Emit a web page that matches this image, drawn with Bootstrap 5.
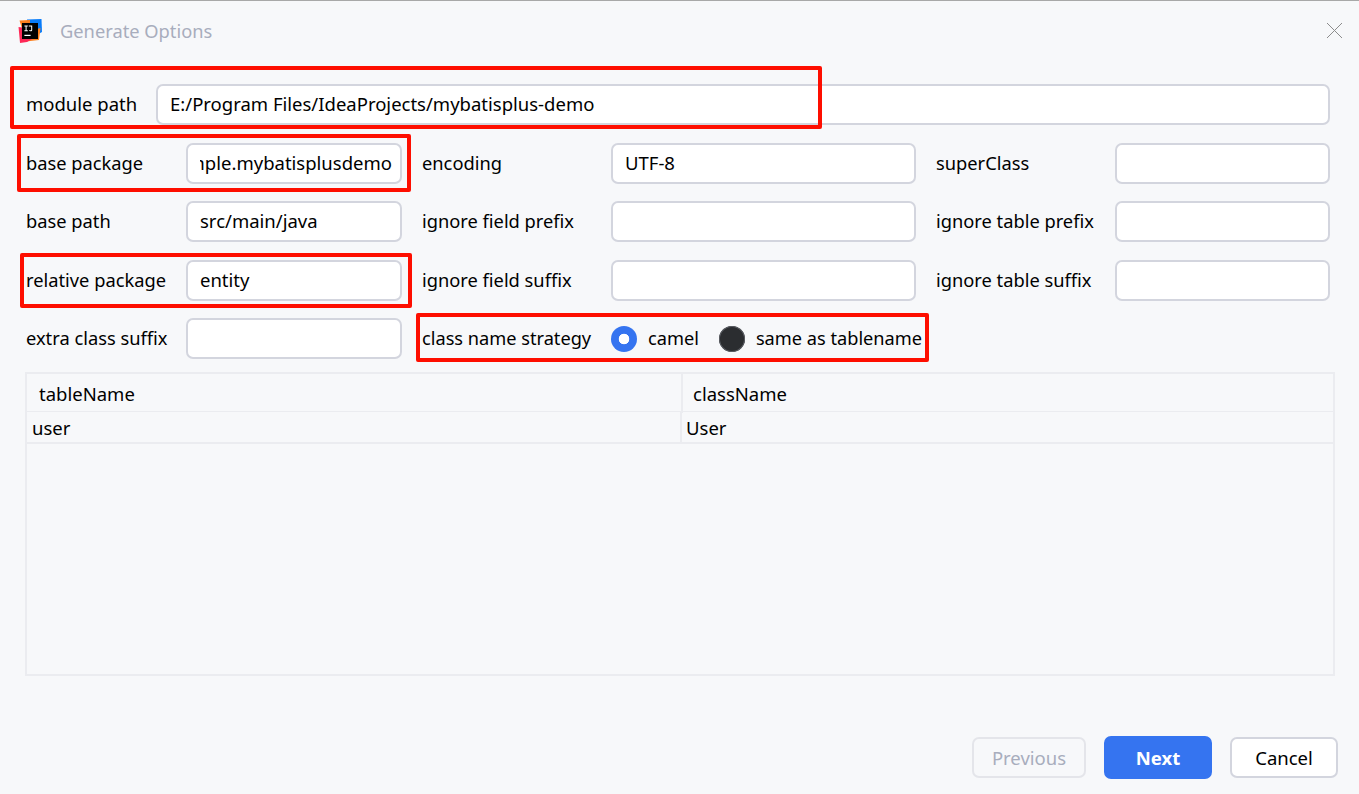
<!doctype html>
<html lang="en">
<head>
<meta charset="utf-8">
<title>Generate Options</title>
<link href="https://cdn.jsdelivr.net/npm/bootstrap@5.3.0/dist/css/bootstrap.min.css" rel="stylesheet">
<style>
html,body{height:100%}
body{background:#f7f8fa;font-family:"Noto Sans",sans-serif;font-size:18.5px;color:#000;overflow:hidden}
.dlg{position:relative;width:1359px;height:794px;border-top:1px solid #a8a8a8}
.dlg-head{height:60px;padding:0 17px 0 18px}
.dlg-logo{flex:none;display:block}
.dlg-title{color:#a8adbd;font-size:18.3px;margin-left:18px;line-height:1}
.dlg-x{width:15px;height:15px;margin-top:-2px}
.dlg-form{padding:23px 29px 0 26px;display:grid;grid-template-columns:160px 216px 209px 305px 199px 215px;row-gap:17.5px}
.fld-label{line-height:39px;height:41px;white-space:nowrap;font-size:18.3px}
.fld-gap{margin-left:20px}
.fld-input.form-control{height:41px;padding:0 8px 2px 12px;border:2px solid #d3d5de;border-radius:7px;font-size:18.5px;color:#000;background:#fff;box-shadow:none}
.span-mod{grid-column:1/-1;display:flex}
.span-mod .fld-label{width:130px;flex:none;font-size:18.5px}
.span-mod .form-control{flex:1;width:auto}
.radio-row{grid-column:3/5;margin-left:20px;display:flex;align-items:center;height:41px;white-space:nowrap;font-size:18.2px}
.radio-row span{margin-top:0}
.rd.form-check-input{width:26px;height:26px;margin:0;flex:none;border:0;background-image:none;background-color:#2b2d30;box-shadow:inset 0 0 0 1px #5a5d63}
.rd.form-check-input:checked{background-color:#3574f0;background-image:radial-gradient(circle at center,#fff 0 5px,#3574f0 5.6px);box-shadow:none}
.rd.rd-gap.form-check-input{margin-left:20px}
.rd-lbl{margin-left:11px}
.strat{width:189px;flex:none}
.grid-tbl{margin:13px 24px 0 25px;height:304px;border:2px solid #ebecf0}
.tbl-row{display:grid}
.tbl-h{grid-template-columns:654px 1fr;height:38px;line-height:39px;border-bottom:1px solid #ebecf0}
.tbl-h>div{padding-left:12px}
.tbl-h>div+div{border-left:2px solid #ebecf0;padding-left:10px}
.tbl-b{grid-template-columns:653px 1fr;height:32px;line-height:32px;border-bottom:2px solid #ebecf0}
.tbl-b>div{padding-left:5px}
.tbl-b>div+div{border-left:2px solid #ebecf0;padding-left:4px}
.dlg-foot{position:absolute;left:0;right:21px;bottom:15px;gap:18px}
.btn.act{height:41px;font-size:18.5px;padding:0;border-radius:7px;border:2px solid #d3d5de;background:#fff;color:#000;width:108px}
.btn.act.prev{width:114px;background:transparent;border-color:#e4e5ea;color:#a8adbd;opacity:1}
.btn.act.nxt{height:43px;background:#3574f0;border-color:#3574f0;color:#fff;font-weight:700}
.mark-box{position:absolute;border:4px solid #fe0e00;border-radius:2px;pointer-events:none}
</style>
</head>
<body>
<div class="dlg">
  <div class="dlg-head d-flex align-items-center">
    <svg class="dlg-logo" width="24" height="24" viewBox="0 0 24 24" aria-hidden="true">
      <path d="M9 0.5 L23.5 0 L24 13 L17 17 L9 8 Z" fill="#087cfa"/>
      <path d="M1.5 1.5 L12 1 L12 12 L22.5 9 L21 21 L8 22.5 Z" fill="#fc801d"/>
      <path d="M0.5 8 L8 9 L14 20 L9 23 L2 24 Z" fill="#fe2857"/>
      <rect x="4" y="4" width="16" height="16" fill="#000"/>
      <path d="M6.4 6.4h3.4v1H8.6v3.8h1.2v1H6.4v-1h1.2V7.4H6.4zM10.8 6.4h3.4v4.6c0 .9-.6 1.3-1.5 1.3-.8 0-1.4-.3-1.7-.8l.7-.6c.2.3.5.4.9.4.4 0 .6-.1.6-.6V7.4h-2.4z" fill="#fff"/>
      <rect x="6.4" y="15.8" width="6.2" height="1.2" fill="#fff"/>
    </svg>
    <span class="dlg-title">Generate Options</span>
    <svg class="dlg-x ms-auto" viewBox="0 0 15 15" aria-hidden="true"><path d="M0 0L15 15M15 0L0 15" stroke="#8c8c8c" stroke-width="1" fill="none"/></svg>
  </div>

  <div class="dlg-form">
    <div class="span-mod">
      <span class="fld-label">module path</span>
      <input class="form-control fld-input" value="E:/Program Files/IdeaProjects/mybatisplus-demo">
    </div>

    <span class="fld-label">base package</span>
    <input id="basePkg" class="form-control fld-input" value="com.example.mybatisplusdemo">
    <span class="fld-label fld-gap">encoding</span>
    <input class="form-control fld-input" value="UTF-8">
    <span class="fld-label fld-gap">superClass</span>
    <input class="form-control fld-input">

    <span class="fld-label">base path</span>
    <input class="form-control fld-input" value="src/main/java">
    <span class="fld-label fld-gap">ignore field prefix</span>
    <input class="form-control fld-input">
    <span class="fld-label fld-gap">ignore table prefix</span>
    <input class="form-control fld-input">

    <span class="fld-label">relative package</span>
    <input class="form-control fld-input" value="entity">
    <span class="fld-label fld-gap">ignore field suffix</span>
    <input class="form-control fld-input">
    <span class="fld-label fld-gap">ignore table suffix</span>
    <input class="form-control fld-input">

    <span class="fld-label">extra class suffix</span>
    <input class="form-control fld-input">
    <div class="radio-row">
      <span class="strat">class name strategy</span>
      <input class="form-check-input rd" type="radio" name="strategy" checked>
      <span class="rd-lbl">camel</span>
      <input class="form-check-input rd rd-gap" type="radio" name="strategy2">
      <span class="rd-lbl">same as tablename</span>
    </div>
  </div>

  <div class="grid-tbl">
    <div class="tbl-row tbl-h"><div>tableName</div><div>className</div></div>
    <div class="tbl-row tbl-b"><div>user</div><div>User</div></div>
  </div>

  <div class="dlg-foot d-flex justify-content-end align-items-center">
    <button class="btn act prev" disabled>Previous</button>
    <button class="btn act nxt">Next</button>
    <button class="btn act">Cancel</button>
  </div>

  <div class="mark-box" style="left:10px;top:65px;width:812px;height:63px"></div>
  <div class="mark-box" style="left:17px;top:133px;width:394px;height:58px"></div>
  <div class="mark-box" style="left:20px;top:252px;width:392px;height:55px"></div>
  <div class="mark-box" style="left:416px;top:312px;width:513px;height:49px"></div>
</div>
<script>
  var pkg = document.getElementById('basePkg');
  pkg.scrollLeft = pkg.scrollWidth;
</script>
</body>
</html>
